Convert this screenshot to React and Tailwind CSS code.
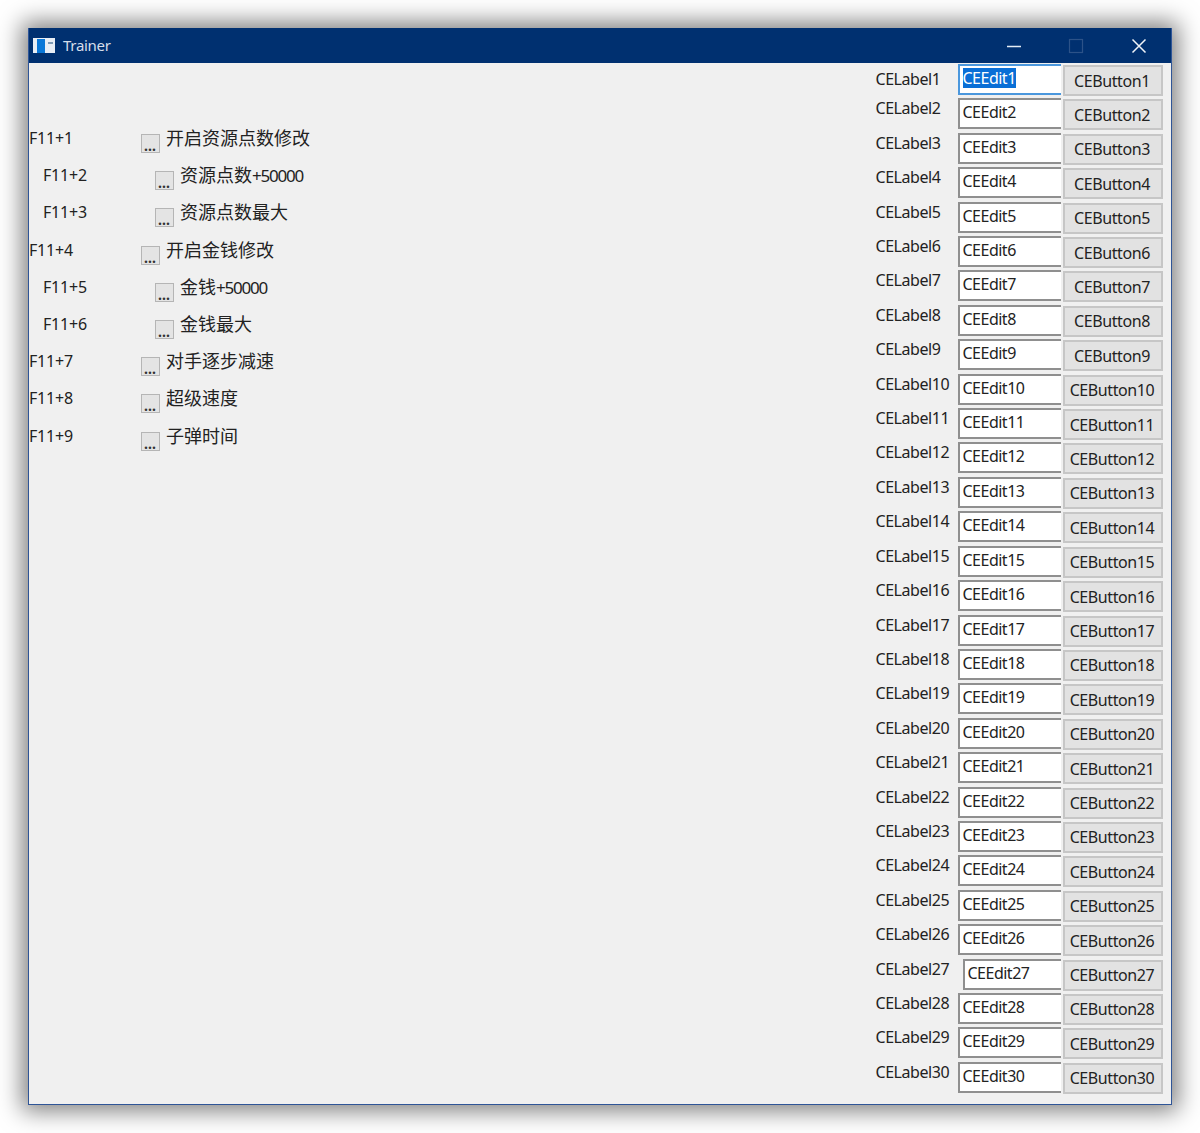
const F = { fontFamily: '"Noto Sans","Noto Sans CJK SC",sans-serif' };

const leftRows = [
  ["F11+1", "开启资源点数修改", "", false],
  ["F11+2", "资源点数", "+50000", true],
  ["F11+3", "资源点数最大", "", true],
  ["F11+4", "开启金钱修改", "", false],
  ["F11+5", "金钱", "+50000", true],
  ["F11+6", "金钱最大", "", true],
  ["F11+7", "对手逐步减速", "", false],
  ["F11+8", "超级速度", "", false],
  ["F11+9", "子弹时间", "", false],
];

function LeftRow({ hotkey, text, suffix, indent }) {
  return (
    <div className={`flex h-[37.2px] items-start ${indent ? "pl-[14px]" : "pl-0"}`}>
      <span className="w-[111.5px] pt-[8px] text-[16px] leading-[20px] tracking-[-0.2px] text-[#222]">{hotkey}</span>
      <span className="mt-[14px] flex h-[19px] w-[19px] items-end justify-center border border-[#b5b5b5] bg-[#e4e4e4] text-[14px] leading-[13px] font-bold text-[#333]">...</span>
      <span className="ml-[6.5px] pt-[6px] text-[18px] leading-[24px] text-[#222]">
        {text}
        {suffix && <span className="text-[17px] tracking-[-1.2px]">{suffix}</span>}
      </span>
    </div>
  );
}

function RightRow({ n }) {
  const focused = n === 1;
  return (
    <div className="flex h-[34.42px] items-start">
      <span className={`w-[83px] text-[16px] leading-[20px] tracking-[-0.45px] text-[#222] pl-[0.5px] ${focused ? "pt-[5px]" : "pt-0"}`}>CELabel{n}</span>
      <span className={`flex h-[31px] items-start bg-white pl-[2.5px] text-[16px] leading-[20px] tracking-[-0.5px] text-[#222] ${n === 27 ? "ml-[5px] w-[98px]" : "w-[103px]"} ${focused ? "border-2 border-r-0 border-[#4a97dd]" : "border-2 border-r-0 border-[#8f8f8f]"}`}>
        {focused ? <span className="mt-[2px] bg-[#0a6fd6] text-white">CEEdit1</span> : <span className="mt-[2px]">CEEdit{n}</span>}
      </span>
      <button className="mt-px ml-[2px] h-[31px] w-[100px] border-2 border-[#c6c6c6] bg-[#e2e2e2] pr-[2px] text-[16px] leading-[20px] tracking-[-0.4px] text-[#222]">CEButton{n}</button>
    </div>
  );
}

export default function App() {
  return (
    <div style={F} className="h-[1133px] w-[1200px] overflow-hidden bg-white pt-[28px] pl-[28px]">
      <div className="flex h-[1077px] w-[1144px] flex-col border border-t-0 border-[#2f5597] bg-[#f0f0f0] shadow-[0_0_22px_6px_rgba(0,0,0,0.5)]">
        <div className="flex h-[35px] shrink-0 items-center bg-[#003070] pl-[4px] text-white">
          <svg width="22" height="15" viewBox="0 0 22 15">
            <rect width="22" height="15" fill="#e8eef5" />
            <rect x="4" y="1" width="8" height="14" fill="#0a78d8" />
            <rect x="15" y="4" width="5" height="2" fill="#7f9bb5" />
          </svg>
          <span className="mb-[2px] ml-[8px] text-[15px] leading-[20px] tracking-[-0.3px] text-[#d5deea]">Trainer</span>
          <div className="ml-auto flex items-center">
            <svg width="16" height="16" viewBox="0 0 16 16" className="mr-[46px]"><path d="M1 8.5H15" stroke="#e4ecf5" strokeWidth="1.5" /></svg>
            <svg width="16" height="16" viewBox="0 0 16 16" className="mr-[47px]"><rect x="1.5" y="1.5" width="13" height="13" fill="none" stroke="#2c5288" strokeWidth="1.2" /></svg>
            <svg width="16" height="16" viewBox="0 0 16 16" className="mr-[24px]"><path d="M1.5 1.5L14.5 14.5M14.5 1.5L1.5 14.5" stroke="#f0f4f8" strokeWidth="1.5" /></svg>
          </div>
        </div>
        <div className="flex flex-1">
          <div className="flex-1 pt-[57px]">
            {leftRows.map(([h, t, s, i]) => <LeftRow key={h} hotkey={h} text={t} suffix={s} indent={i} />)}
          </div>
          <div className="mt-px mr-px w-[295px] shrink-0">
            {Array.from({ length: 30 }, (_, i) => <RightRow key={i} n={i + 1} />)}
          </div>
        </div>
      </div>
    </div>
  );
}
